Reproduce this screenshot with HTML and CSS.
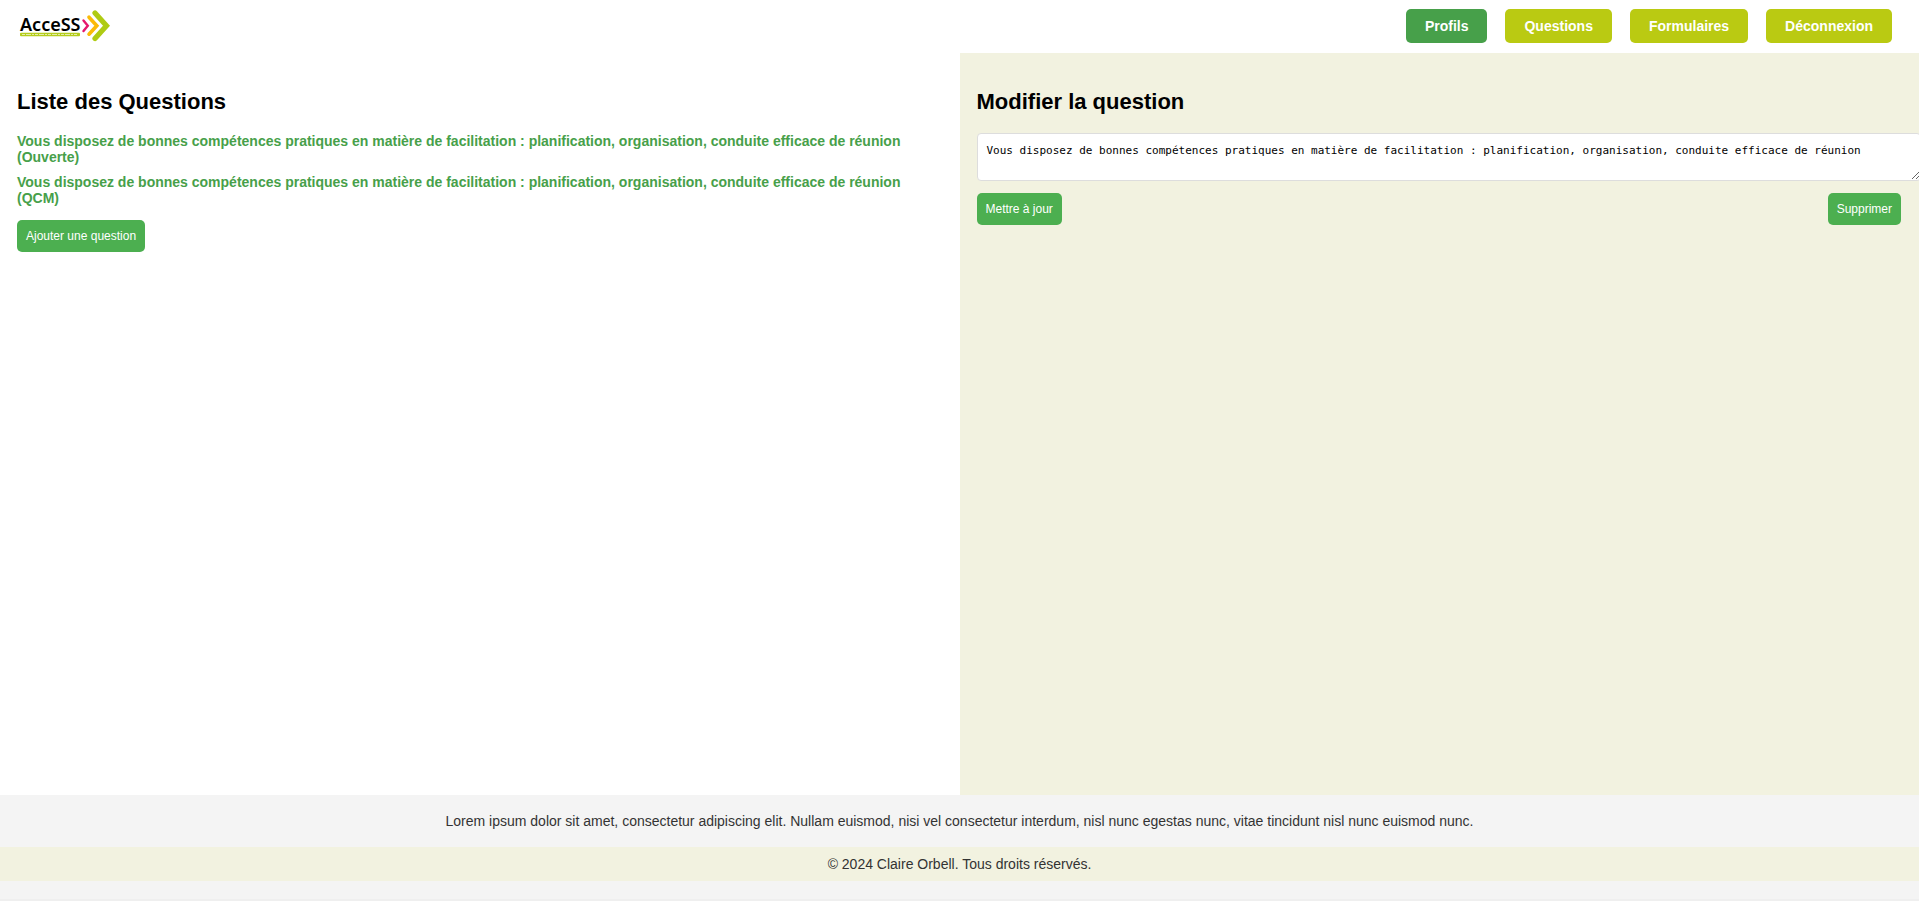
FILE: index.html
```html
<!DOCTYPE html>
<html lang="fr">
<head>
<meta charset="utf-8">
<meta name="viewport" content="width=device-width, initial-scale=1">
<title>AcceSS - Questions</title>
<link rel="stylesheet" href="styles.css">
</head>
<body>
<header class="header">
  <a class="brand" href="#" aria-label="AcceSS">
    <svg class="logo" viewBox="0 0 94 34" aria-hidden="true">
      <text class="logo-name" x="2" y="22">AcceSS</text>
      <rect x="2" y="23.700" width="60" height="3.600" rx="1" fill="#b5cd1c"/>
      <path d="M4 25.500H60" stroke="#e3edaa" stroke-width="1" stroke-dasharray="3 1 5 1 2 1"/>
      <g fill="none" stroke-linecap="round" stroke-linejoin="miter">
        <path d="M65.500 11.500L69.800 16.800L65.500 22.100" stroke="#e5176b" stroke-width="2.400"/>
        <path d="M71 8.200L78.800 16.800L71 25.200" stroke="#fbba07" stroke-width="3.600"/>
        <path d="M77 4L88.500 16.800L77 29.600" stroke="#afcb13" stroke-width="5.200"/>
      </g>
    </svg>
  </a>
  <nav class="nav">
    <a class="nav-link active" href="#">Profils</a>
    <a class="nav-link" href="#">Questions</a>
    <a class="nav-link" href="#">Formulaires</a>
    <a class="nav-link" href="#">Déconnexion</a>
  </nav>
</header>
<main class="main">
  <section class="panel">
    <h2 class="title">Liste des Questions</h2>
    <ul class="questions">
      <li><a class="question" href="#">Vous disposez de bonnes compétences pratiques en matière de facilitation : planification, organisation, conduite efficace de réunion (Ouverte)</a></li>
      <li><a class="question" href="#">Vous disposez de bonnes compétences pratiques en matière de facilitation : planification, organisation, conduite efficace de réunion (QCM)</a></li>
    </ul>
    <button class="button" type="button">Ajouter une question</button>
  </section>
  <section class="panel panel-edit">
    <h2 class="title" id="edit-title">Modifier la question</h2>
    <form>
      <textarea class="editor" rows="2" spellcheck="false" aria-labelledby="edit-title">Vous disposez de bonnes compétences pratiques en matière de facilitation : planification, organisation, conduite efficace de réunion</textarea>
      <div class="actions">
        <button class="button" type="button">Mettre à jour</button>
        <button class="button" type="button">Supprimer</button>
      </div>
    </form>
  </section>
</main>
<footer class="footer">
  <p class="about">Lorem ipsum dolor sit amet, consectetur adipiscing elit. Nullam euismod, nisi vel consectetur interdum, nisl nunc egestas nunc, vitae tincidunt nisl nunc euismod nunc.</p>
  <p class="copyright">© 2024 Claire Orbell. Tous droits réservés.</p>
</footer>
</body>
</html>
```
FILE: styles.css
```css
body {
  margin: 0;
  min-height: 100vh;
  display: flex;
  flex-direction: column;
  background: #fff;
  color: #000;
  font-family: "Liberation Sans", Arial, sans-serif;
  font-size: 14px;
  line-height: 16px;
}

.header {
  display: flex;
  align-items: center;
  justify-content: space-between;
  padding: 9px 27px 10px 18px;
}

.brand {
  display: flex;
}

.logo {
  width: 94px;
  height: 34px;
}

.logo-name {
  font-family: "Noto Sans", sans-serif;
  font-size: 18px;
  font-weight: 600;
}

.nav {
  display: flex;
  gap: 18px;
}

.nav-link {
  padding: 9px 19px;
  border-radius: 5px;
  background: #baca12;
  color: #fff;
  font-weight: bold;
  text-decoration: none;
}

.nav-link.active {
  background: #47a04a;
}

.main {
  flex: 1;
  display: grid;
  grid-template-columns: 1fr 1fr;
}

.panel {
  min-width: 0;
  padding: 36px 18px 18px 17px;
}

.panel-edit {
  overflow: hidden;
  background: #f2f2e0;
}

.title {
  margin: 0 0 18px;
  font-size: 22px;
  line-height: 26px;
}

.questions {
  display: flex;
  flex-direction: column;
  gap: 9px;
  margin: 0 0 14px;
  padding: 0;
  list-style: none;
}

.question {
  display: block;
  color: #47a04a;
  font-weight: bold;
  text-decoration: none;
}

.button {
  padding: 9px;
  border: 0;
  border-radius: 5px;
  background: #4caf50;
  color: #fff;
  font-family: inherit;
  font-size: 12px;
  line-height: 14px;
}

.editor {
  display: block;
  width: 100%;
  margin: 0 0 12px;
  padding: 10px 9px 8px;
  border: 1px solid #ddd;
  border-radius: 4px;
  font-family: "DejaVu Sans Mono", monospace;
  font-size: 11px;
  line-height: 14px;
}

.actions {
  display: flex;
  justify-content: space-between;
}

.footer {
  padding-bottom: 18px;
  border-bottom: 2px solid #efefef;
  background: #f4f4f4;
  color: #333;
  text-align: center;
}

.about {
  margin: 0;
  padding: 18px;
}

.copyright {
  margin: 0;
  padding: 9px;
  background: #f2f2e0;
}
```
